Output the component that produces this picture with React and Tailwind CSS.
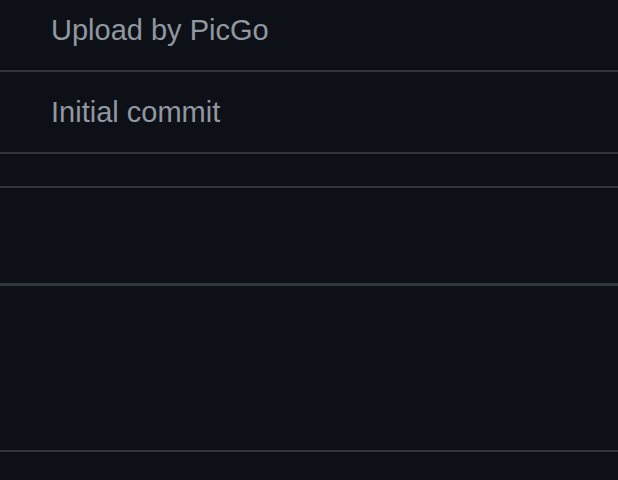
const rows = ['Upload by PicGo', 'Initial commit'];

export default function App() {
  return (
    <div className="h-[480px] w-[618px] overflow-hidden bg-[#0d1117] font-['Liberation_Sans',Arial,sans-serif]">
      <div className="-mt-[10px]">
        {rows.map((r) => (
          <div key={r} className="flex h-[82px] items-center border-b-2 border-[#2f353c] pl-[51px]">
            <span className="text-[29px] leading-none text-[#9198a1]">{r}</span>
          </div>
        ))}
      </div>
      <div className="h-[34px] border-b-2 border-[#2f353c]" />
      <div className="h-[98px] border-b-[3px] border-[#30363d]" />
      <div className="h-[166px] border-b-2 border-[#2f353c]" />
    </div>
  );
}
